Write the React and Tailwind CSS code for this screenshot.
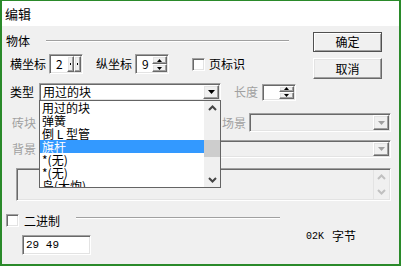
import React from 'react'

const sunken =
  'border border-t-[#a0a0a0] border-l-[#a0a0a0] border-r-white border-b-white shadow-[inset_1px_1px_0_#696969,inset_-1px_-1px_0_#e3e3e3]'
const raised =
  'bg-[#f0f0f0] border border-t-white border-l-white border-r-[#696969] border-b-[#696969] shadow-[inset_-1px_-1px_0_#a0a0a0,inset_1px_1px_0_#e3e3e3]'

function Tri({ up = false, color = '#000', w = 7, h = 4 }) {
  return (
    <svg width={w} height={h} viewBox={`0 0 ${w} ${h}`}>
      <path d={up ? `M0 ${h}H${w}L${w / 2} 0z` : `M0 0H${w}L${w / 2} ${h}z`} fill={color} />
    </svg>
  )
}

function Chevron({ up = false, color = '#444' }) {
  return (
    <svg width="9" height="6" viewBox="0 0 9 6">
      <path d={up ? 'M1 5L4.5 1.5L8 5' : 'M1 1L4.5 4.5L8 1'} stroke={color} strokeWidth="2" fill="none" />
    </svg>
  )
}

function Spin({ value, width = 'w-[34px]', height = 'h-[20px]', sideways = false }) {
  return (
    <div className={`${sunken} ${width} ${height} bg-white flex items-stretch`}>
      <span className="flex-1 pl-[6px] flex items-center">{value}</span>
      {sideways ? (
        <div className="flex py-[1px] pr-[1px]">
          <div className={`${raised} w-[7px] flex items-center justify-center`}>
            <span className="w-[1px] h-[2px] bg-black" />
          </div>
          <div className={`${raised} w-[7px] flex items-center justify-center`}>
            <span className="w-[1px] h-[2px] bg-black" />
          </div>
        </div>
      ) : (
        <div className="flex flex-col py-[1px] pr-[1px] w-[16px]">
          <div className={`${raised} flex-1 flex items-center justify-center`}>
            <Tri up w={5} h={3} />
          </div>
          <div className={`${raised} flex-1 flex items-center justify-center`}>
            <Tri w={5} h={3} />
          </div>
        </div>
      )}
    </div>
  )
}

function Combo({ text, width, height = 'h-[18px]', disabled = false }) {
  return (
    <div className={`${sunken} ${width} ${height} ${disabled ? 'bg-[#f0f0f0]' : 'bg-white'} flex items-stretch`}>
      <span className="flex-1 pl-[3px] flex items-center">{text}</span>
      <div className={`${raised} w-[16px] my-[1px] mr-[1px] flex items-center justify-center`}>
        <Tri color={disabled ? '#a0a0a0' : '#000'} />
      </div>
    </div>
  )
}

function Check() {
  return <div className={`${sunken} w-[13px] h-[13px] bg-white`} />
}

const items = ['用过的块', '弹簧', '倒 L 型管', '旗杆', '*(无)', '*(无)', '岛(大炮)']

export default function App() {
  return (
    <div className="w-[401px] h-[266px] border-x-2 border-t border-b-2 border-[#2a8a2a] bg-[#f0f0f0] flex flex-col text-[12px] leading-none text-black font-['Noto_Sans_CJK_SC','Liberation_Sans',sans-serif] overflow-hidden">
      <div className="h-[25px] bg-white px-[3px] flex items-center text-[13px]">编辑</div>

      <div className="flex-1 relative">
        <div className="flex pt-[5px]">
          <div className="w-[287px] pl-[4px]">
            <div className="h-[20px] flex items-center">
              <span>物体</span>
              <div className="ml-[16px] flex-1 h-[2px] border-t border-t-[#a0a0a0] border-b border-b-white" />
            </div>
            <div className="mt-[3px] h-[20px] flex items-center pl-[4px]">
              <span>横坐标</span>
              <div className="ml-[3px]">
                <Spin value="2" sideways />
              </div>
              <span className="ml-[13px]">纵坐标</span>
              <div className="ml-[3px]">
                <Spin value="9" />
              </div>
              <div className="ml-[23px]">
                <Check />
              </div>
              <span className="ml-[4px]">页标识</span>
            </div>
          </div>
          <div className="ml-[24px] pt-[1px] flex flex-col gap-[6px]">
            <button className="w-[69px] h-[20px] bg-[#f0f0f0] border border-[#505050] shadow-[inset_1px_1px_0_white,inset_-1px_-1px_0_#a0a0a0] flex items-center justify-center">
              确定
            </button>
            <button className={`${raised} w-[69px] h-[21px] flex items-center justify-center`}>取消</button>
          </div>
        </div>

        <div className="mt-[4px] h-[18px] flex items-center pl-[8px]">
          <span>类型</span>
          <div className="ml-[5px]">
            <Combo text="用过的块" width="w-[182px]" />
          </div>
          <span className="ml-[13px] text-[#a0a0a0]">长度</span>
          <div className="ml-[4px]">
            <Spin value="" height="h-[17px]" />
          </div>
        </div>

        <div className="mt-[12px] h-[19px] flex items-center pl-[10px]">
          <span className="text-[#a0a0a0]">砖块</span>
          <div className="ml-[3px]">
            <Combo text="" width="w-[176px]" height="h-[19px]" disabled />
          </div>
          <span className="ml-[7px] text-[#a0a0a0]">场景</span>
          <div className="ml-[3px]">
            <Combo text="" width="w-[142px]" height="h-[19px]" disabled />
          </div>
        </div>

        <div className="mt-[8px] h-[18px] flex items-center pl-[10px]">
          <span className="text-[#a0a0a0]">背景</span>
          <div className="ml-[3px]">
            <Combo text="" width="w-[352px]" disabled />
          </div>
        </div>

        <div className={`mt-[10px] ml-[14px] w-[375px] h-[33px] ${sunken} bg-[#f0f0f0] flex justify-end`}>
          <div className="w-[16px] my-[1px] mr-[1px] bg-[#f0f0f0] border-l border-[#e3e3e3] flex flex-col items-center justify-between py-[4px]">
            <Chevron up color="#c0c0c0" />
            <Chevron color="#c0c0c0" />
          </div>
        </div>

        <div className="mt-[13px] h-[13px] flex items-center pl-[4px]">
          <Check />
          <span className="ml-[5px]">二进制</span>
          <div className="ml-[16px] self-start mt-[3px] w-[204px] h-[2px] border-t border-t-[#a0a0a0] border-b border-b-white" />
        </div>

        <div className="mt-[3px] flex items-start">
          <div className={`ml-[20px] mt-[5px] w-[69px] h-[20px] ${sunken} bg-white flex items-center pl-[3px] text-[11px] font-['Liberation_Mono',monospace]`}>
            29 49
          </div>
          <div className="ml-[215px] flex items-end gap-[8px]">
            <span className="text-[10px] font-['Liberation_Mono',monospace]">02K</span>
            <span>字节</span>
          </div>
        </div>

        <div className="absolute left-[37px] top-[74px] w-[182px] h-[88px] border border-[#646464] bg-white flex overflow-hidden">
          <div className="flex-1 flex flex-col">
            {items.map((t, i) => (
              <div
                key={i}
                className={`h-[13px] shrink-0 pl-[2px] flex items-center leading-[13px] ${i === 3 ? 'bg-[#3399ff] text-white' : ''}`}
              >
                {t}
              </div>
            ))}
          </div>
          <div className="w-[16px] bg-[#f0f0f0] relative flex flex-col items-center justify-between py-[4px]">
            <Chevron up />
            <div className="absolute left-0 top-[39px] w-[16px] h-[17px] bg-[#cdcdcd]" />
            <Chevron />
          </div>
        </div>
      </div>
    </div>
  )
}
